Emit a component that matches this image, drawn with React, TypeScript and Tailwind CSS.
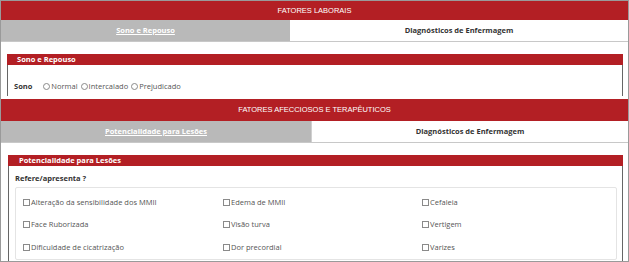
import React from "react";

const RED = "bg-[#b31f24]";

function Radio({ label }: { label: string }) {
  return (
    <span className="flex items-center mr-[3px]">
      <span className="inline-block w-[7px] h-[7px] rounded-full border border-[#8a8a8a] mr-[1px]" />
      <span>{label}</span>
    </span>
  );
}

function Check({ label }: { label: string }) {
  return (
    <span className="flex items-center">
      <span className="inline-block w-[7px] h-[7px] border border-[#8a8a8a] mr-[1px]" />
      <span>{label}</span>
    </span>
  );
}

export default function App() {
  const sans = "font-['Open_Sans',sans-serif]";
  const arial = "font-['Liberation_Sans',Arial,sans-serif]";
  const rows = [
    ["Alteração da sensibilidade dos MMII", "Edema de MMII", "Cefaleia"],
    ["Face Ruborizada", "Visão turva", "Vertigem"],
    ["Dificuldade de cicatrização", "Dor precordial", "Varizes"],
  ];
  return (
    <div className={`w-[629px] h-[262px] overflow-hidden bg-white border border-[#9a9a9a] ${sans} text-[#444]`}>
      {/* Section 1 */}
      <div className={`h-[19px] ${RED} text-white text-[7.5px] flex items-center justify-center ${arial}`}>
        FATORES LABORAIS
      </div>
      <div className="flex h-[22px] border-b border-[#c8c8c8]">
        <div className="w-[289px] bg-[#b9b9b9] text-white font-bold underline text-[7.5px] flex items-center justify-center">
          Sono e Repouso
        </div>
        <div className="flex-1 flex items-center justify-center font-bold text-[7.5px] text-[#333]">
          Diagnósticos de Enfermagem
        </div>
      </div>
      <div className="pt-[12px] pl-[6px] pr-[5px]">
        <div className={`h-[11px] ${RED} text-white font-bold text-[7.5px] flex items-center pl-[10px]`}>
          Sono e Repouso
        </div>
        <div className="h-[31px] border-l border-r border-[#666] flex items-center pl-[6px] pt-[12px] text-[7.5px] text-[#555]">
          <span className="font-bold text-[#333] mr-[11px]">Sono</span>
          <Radio label="Normal" />
          <Radio label="Intercalado" />
          <Radio label="Prejudicado" />
        </div>
      </div>
      {/* Section 2 */}
      <div className={`mt-[3px] h-[22px] ${RED} text-white text-[7.5px] flex items-center justify-center ${arial}`}>
        FATORES AFECCIOSOS E TERAPÊUTICOS
      </div>
      <div className="flex h-[22px] border-b border-[#c8c8c8]">
        <div className="w-[310px] bg-[#b9b9b9] text-white font-bold underline text-[7.5px] flex items-center justify-center">
          Potencialidade para Lesões
        </div>
        <div className="flex-1 flex items-center justify-center font-bold text-[7.5px] text-[#333] border-l border-[#d0d0d0]">
          Diagnósticos de Enfermagem
        </div>
      </div>
      <div className="pt-[12px] pl-[7px] pr-[5px]">
        <div className={`h-[11px] ${RED} text-white font-bold text-[7.5px] flex items-center pl-[11px]`}>
          Potencialidade para Lesões
        </div>
        <div className="h-[120px] border-l border-r border-[#666] pl-[6px] pr-[5px] text-[7.5px]">
          <div className="h-[21px] pt-[5px] flex items-center font-bold text-[#333]">Refere/apresenta ?</div>
          <div className="border border-[#e4e4e4] rounded-[2px] pl-[7px] pt-[3px] text-[#555]">
            {rows.map((r, i) => (
              <div key={i} className="grid grid-cols-[200px_199px_1fr] h-[22.5px] items-center">
                {r.map((c) => (
                  <Check key={c} label={c} />
                ))}
              </div>
            ))}
          </div>
        </div>
      </div>
    </div>
  );
}
